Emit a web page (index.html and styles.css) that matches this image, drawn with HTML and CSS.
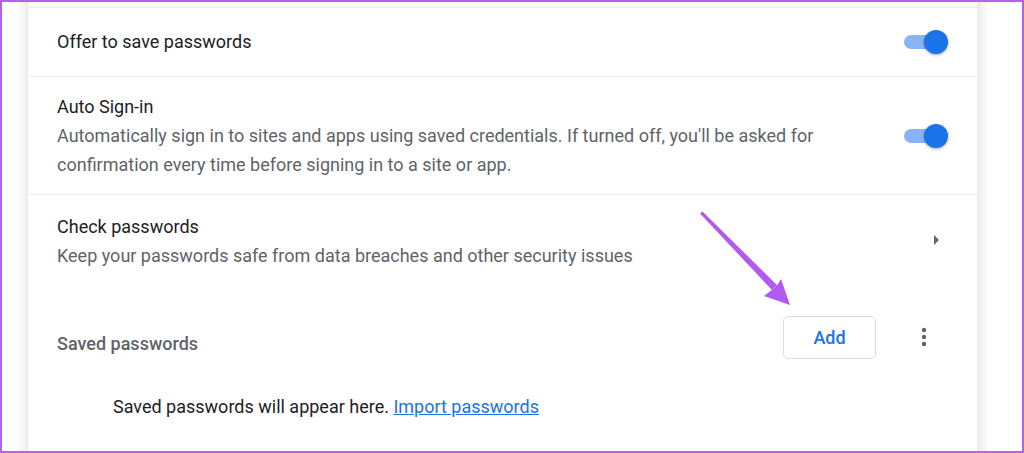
FILE: index.html
```html
<!DOCTYPE html>
<html>
<head>
<meta charset="utf-8">
<link rel="stylesheet" href="styles.css">
</head>
<body>
<div class="frame">
  <div class="gutter"></div>
  <main class="card">
    <div class="top-fragment"></div>
    <div class="row row-single">
      <div class="label">Offer to save passwords</div>
      <div class="toggle"><span class="track"></span><span class="knob"></span></div>
    </div>
    <div class="row row-auto">
      <div class="text">
        <div class="label">Auto Sign-in</div>
        <div class="sub">Automatically sign in to sites and apps using saved credentials. If turned off, you'll be asked for confirmation every time before signing in to a site or app.</div>
      </div>
      <div class="toggle"><span class="track"></span><span class="knob"></span></div>
    </div>
    <div class="row row-check">
      <div class="text">
        <div class="label">Check passwords</div>
        <div class="sub">Keep your passwords safe from data breaches and other security issues</div>
      </div>
      <svg class="chev" width="8" height="10" viewBox="0 0 8 10"><path d="M1 0 L6 5 L1 10 Z" fill="#5f6368"/></svg>
    </div>
    <div class="saved-head">
      <div class="saved-title">Saved passwords</div>
      <button class="add-btn">Add</button>
      <svg class="kebab" width="6" height="20" viewBox="0 0 6 20"><circle cx="3" cy="3" r="2.2" fill="#5f6368"/><circle cx="3" cy="10" r="2.2" fill="#5f6368"/><circle cx="3" cy="17" r="2.2" fill="#5f6368"/></svg>
    </div>
    <div class="empty">Saved passwords will appear here. <a href="#" class="link">Import passwords</a></div>
  </main>
  <div class="gutter right"></div>
  <svg class="annot" width="1024" height="453" viewBox="0 0 1024 453">
    <polygon points="700,213.5 702.5,211.5 777,285 772,290" fill="#b15af2"/>
    <polygon points="790,305 764,296 773,289 778,284 781,279" fill="#b15af2"/>
  </svg>
</div>
</body>
</html>
```

FILE: styles.css
```css
html, body {
  margin: 0;
  padding: 0;
  height: 453px;
  overflow: hidden;
  background: #fff;
}
body {
  font-family: Roboto, "Liberation Sans", sans-serif;
}
.frame {
  position: relative;
  box-sizing: border-box;
  width: 1024px;
  height: 453px;
  border: 2px solid #b561f5;
  display: flex;
  overflow: hidden;
}
.gutter {
  width: 26px;
  flex: none;
  background: linear-gradient(to right, #fff 0, #fff 14px, #f1f1f1 24px, #e6e6e6 26px);
}
.gutter.right {
  flex: 1;
  background: linear-gradient(to right, #e9e9e9 0, #f3f3f3 5px, #fff 12px);
}
.card {
  width: 949px;
  flex: none;
  background: #fff;
  display: flex;
  flex-direction: column;
}
.top-fragment {
  height: 5px;
  border-bottom: 1px solid #eeeeee;
}
.row {
  display: flex;
  align-items: center;
  padding: 0 29px;
  border-bottom: 1px solid #eeeeee;
}
.row-single {
  height: 68px;
}
.row-auto {
  height: 117px;
}
.row-check {
  height: 95px;
  border-bottom: none;
  align-items: flex-start;
  padding-top: 18px;
  box-sizing: border-box;
}
.text {
  flex: 1;
}
.label {
  flex: 1;
  font-size: 18px;
  color: #202124;
  line-height: 28px;
}
.sub {
  font-size: 18px;
  color: #5f6368;
  line-height: 29px;
  max-width: 790px;
}
.toggle {
  position: relative;
  width: 44px;
  height: 24px;
  flex: none;
  margin-left: 20px;
}
.track {
  position: absolute;
  left: 0;
  top: 5px;
  width: 40px;
  height: 14px;
  border-radius: 7px;
  background: #8ab4f8;
}
.knob {
  position: absolute;
  right: 0;
  top: 0;
  width: 24px;
  height: 24px;
  border-radius: 50%;
  background: #1a73e8;
  box-shadow: 0 1px 3px rgba(0,0,0,0.35);
}
.chev {
  margin-left: auto;
  margin-top: 22px;
  margin-right: 7px;
}
.saved-head {
  display: flex;
  align-items: center;
  padding: 0 0 0 29px;
  height: 44px;
  margin-top: 25px;
}
.saved-title {
  flex: 1;
  font-size: 18px;
  font-weight: 500;
  color: #5f6368;
  padding-top: 12px;
}
.add-btn {
  width: 93px;
  height: 43px;
  border: 1px solid #dadce0;
  border-radius: 5px;
  background: #fff;
  color: #1a73e8;
  font-family: Roboto, "Liberation Sans", sans-serif;
  font-size: 18px;
  font-weight: 500;
  padding: 0;
}
.kebab {
  margin-left: 45px;
  margin-right: 50px;
}
.empty {
  padding-left: 85px;
  margin-top: 37px;
  font-size: 18px;
  color: #202124;
}
.link {
  color: #1a73e8;
  text-decoration: underline;
}
.annot {
  position: absolute;
  left: -2px;
  top: -2px;
  pointer-events: none;
}
```
